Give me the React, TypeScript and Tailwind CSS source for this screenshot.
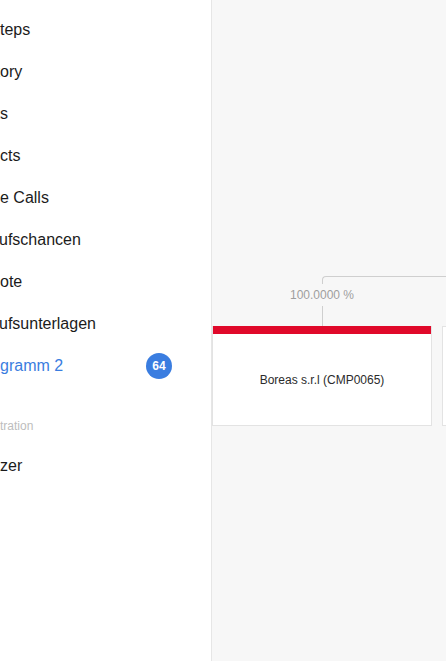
import React from "react";

// prefix = part of the label that runs off the left edge of the sidebar
const items = [
  { pre: "Next S", rest: "teps" },
  { pre: "Kontakthist", rest: "ory" },
  { pre: "Task", rest: "s" },
  { pre: "Produ", rest: "cts" },
  { pre: "Phon", rest: "e Calls" },
  { pre: "Verka", rest: "ufschancen", shift: true },
  { pre: "Angeb", rest: "ote" },
  { pre: "Verka", rest: "ufsunterlagen", shift: true },
  { pre: "Organi", rest: "gramm 2", active: true, badge: 64 },
];

const Label = ({ pre, rest, shift }: any) => (
  <span className={`flex whitespace-nowrap ${shift ? "-ml-px" : ""}`}>
    <span className="w-0 flex justify-end">{pre}</span>
    <span>{rest}</span>
  </span>
);

const NavRow = ({ active, badge, ...label }: any) => (
  <div className="h-[42px] flex items-center justify-between pr-[39px]">
    <span className={`text-[16px] ${active ? "text-[#3a7de0]" : "text-[#1b1b1b]"}`}>
      <Label {...label} />
    </span>
    {badge && (
      <span className="w-[26px] h-[26px] rounded-full bg-[#3a7de0] text-white text-[12px] font-bold flex items-center justify-center">{badge}</span>
    )}
  </div>
);

export default function App() {
  return (
    <div className="flex w-[446px] h-[661px] overflow-hidden" style={{ fontFamily: "'Liberation Sans', Arial, sans-serif" }}>
      <aside className="w-[212px] shrink-0 h-full bg-white border-r border-[#e6e6e6] overflow-hidden">
        <div className="pt-[9px]">
          {items.map((it) => <NavRow key={it.rest} {...it} />)}
          <div className="h-[18px] mt-[30px] flex items-center text-[12px] text-[#bdbdbd]">
            <Label pre="Adminis" rest="tration" />
          </div>
          <div className="mt-[10px]"><NavRow pre="Benut" rest="zer" /></div>
        </div>
      </aside>

      <main className="flex-1 h-full bg-[#f7f7f7] overflow-hidden pt-[276px]">
        <div className="flex gap-[10px]">
          {/* node 1 */}
          <div className="w-[220px] shrink-0 flex flex-col">
            <div className="ml-[110px] w-[120px] h-[8px] border-t border-l border-[#cfcfcf] rounded-tl-[4px]" />
            <div className="h-[22px] leading-[22px] text-center text-[12px] text-[#9e9e9e]">100.0000 %</div>
            <div className="ml-[110px] h-[20px] border-l border-[#cfcfcf]" />
            <div className="h-[100px] bg-white border border-[#e3e3e3] border-t-0 flex flex-col">
              <div className="h-[8px] bg-[#e0092a]" />
              <div className="flex-1 flex items-center justify-center text-[12px] text-[#2b2b2b]">Boreas s.r.l (CMP0065)</div>
            </div>
          </div>
          {/* node 2 */}
          <div className="w-[220px] shrink-0 flex flex-col">
            <div className="h-[8px] border-t border-[#cfcfcf] -ml-[10px]" />
            <div className="h-[22px]" />
            <div className="h-[20px]" />
            <div className="h-[100px] bg-white border border-[#e3e3e3]" />
          </div>
        </div>
      </main>
    </div>
  );
}
